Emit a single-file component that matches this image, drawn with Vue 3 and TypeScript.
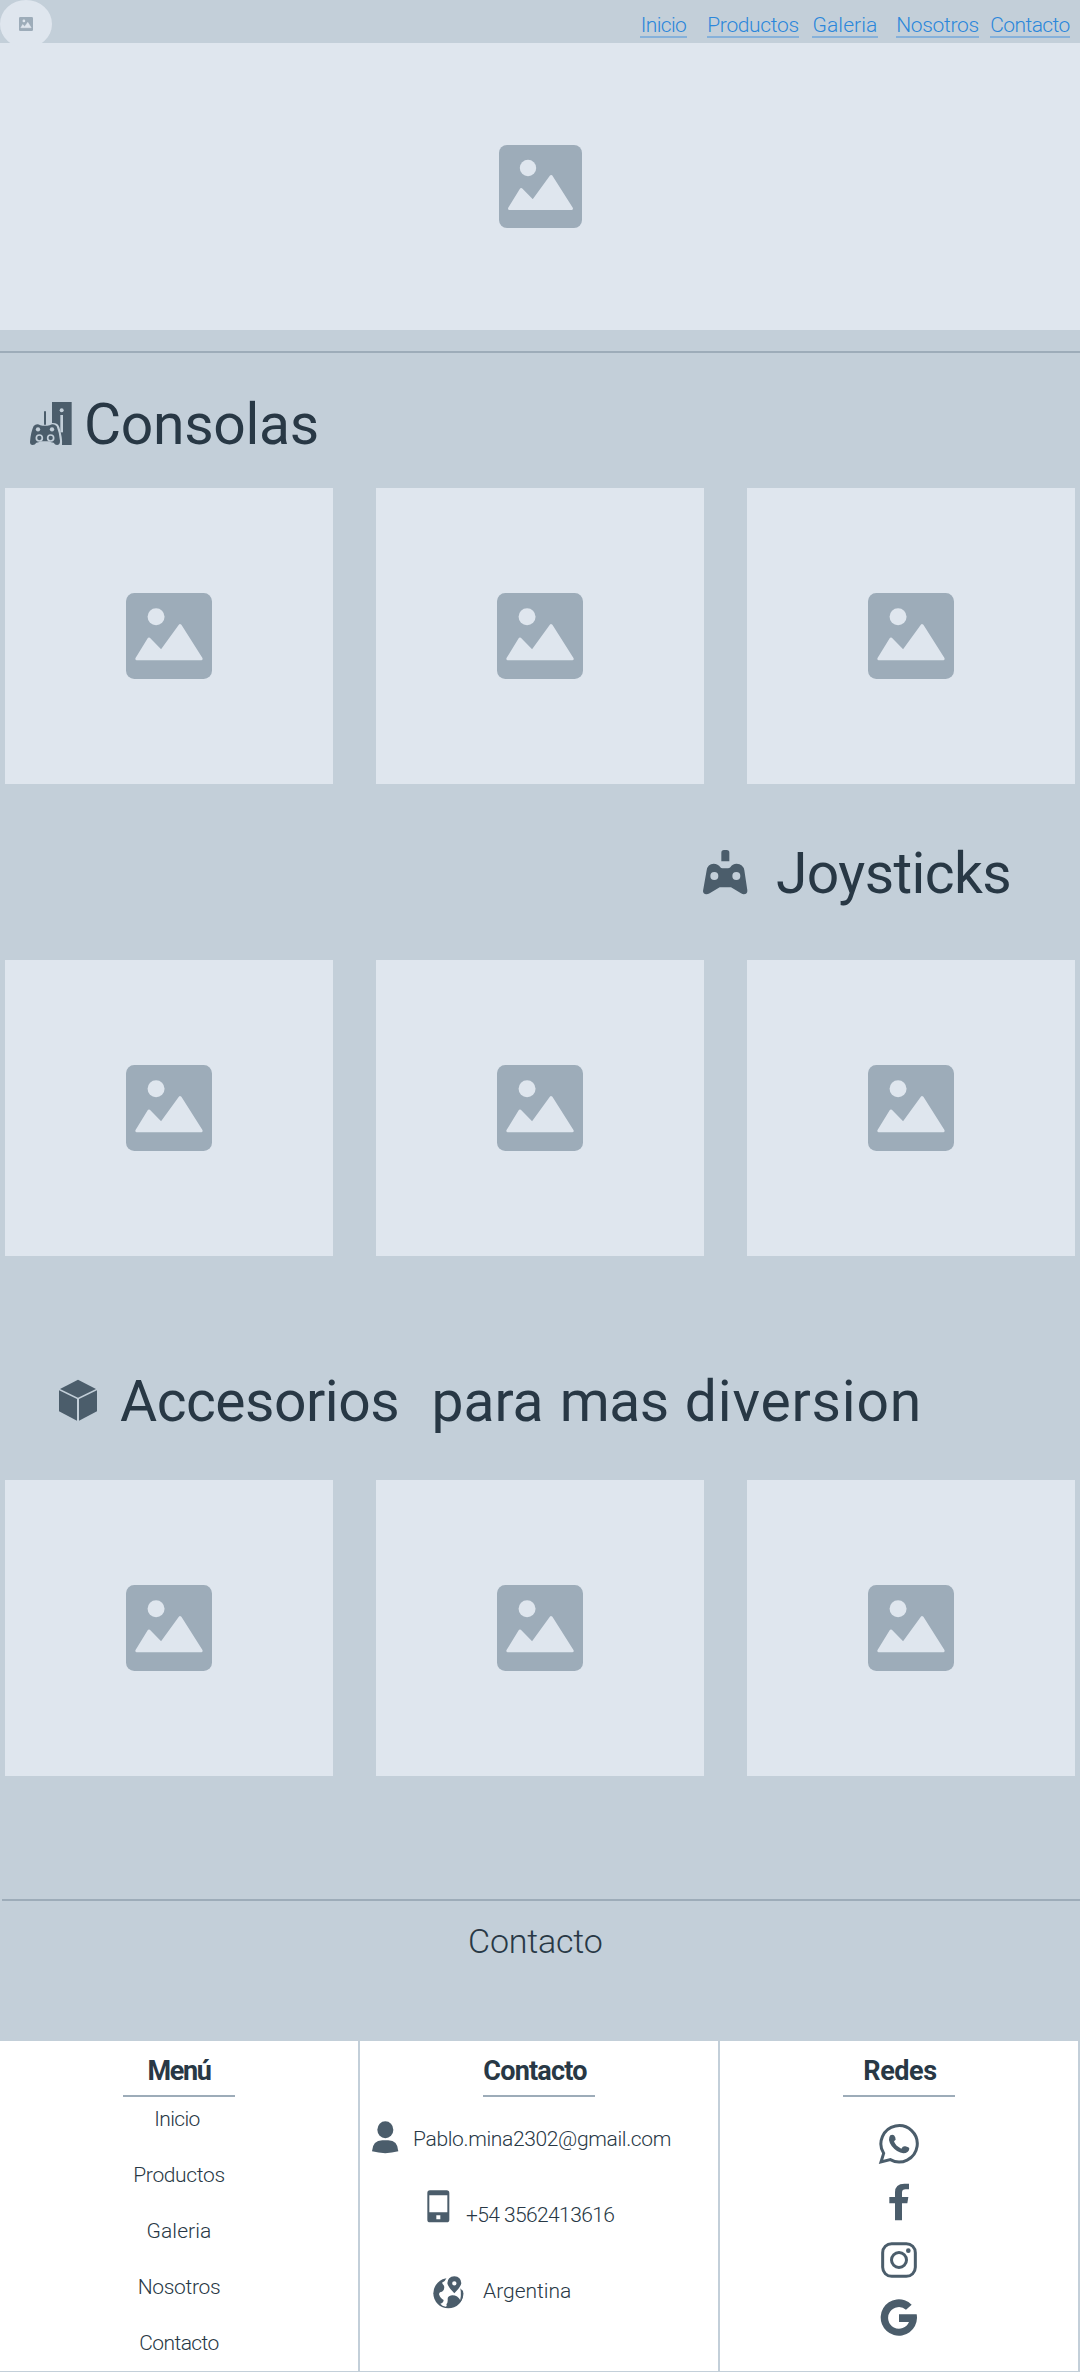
<script setup lang="ts">
interface Label {
  text: string
  width: number
  tracking: number
}

const links: Label[] = [
  { text: 'Inicio', width: 47, tracking: -0.6 },
  { text: 'Productos', width: 92, tracking: -0.35 },
  { text: 'Galeria', width: 66, tracking: 0.1 },
  { text: 'Nosotros', width: 83, tracking: -0.3 },
  { text: 'Contacto', width: 80, tracking: -0.6 },
]
const cards = [1, 2, 3]
</script>

<template>
  <div class="page">
    <header class="bar">
      <div class="logo">
        <svg class="pic pic-logo" viewBox="0 0 83 83"><rect width="83" height="83" rx="8" /><circle cx="29" cy="23" r="8.2" /><path d="M10.5 63.500L22.200 44.500L34 56.500L52.200 31.500L72.500 63.500Z" /></svg>
      </div>
      <nav class="nav">
        <a v-for="l in links" :key="l.text" class="link" :style="{ width: l.width + 'px', letterSpacing: l.tracking + 'px' }">{{ l.text }}</a>
      </nav>
    </header>

    <div class="hero">
      <svg class="pic pic-hero" viewBox="0 0 83 83"><rect width="83" height="83" rx="8" /><circle cx="29" cy="23" r="8.2" /><path d="M10.5 63.500L22.200 44.500L34 56.500L52.200 31.500L72.500 63.500Z" /></svg>
    </div>
    <div class="rule rule-top"></div>

    <section>
      <div class="heading h-consolas">
        <svg width="42" height="43" viewBox="90 276 126 129" class="ico">
          <path d="M156 276H215V405H156Z" />
          <path d="M132 304H138V344H132Z" />
          <circle cx="185" cy="301" r="6" class="cut" />
          <path d="M181 315H189V367H181Z" class="cut" />
          <path d="M154 339Q174 337 178 352Q188 384 186 405H152Z" class="cut" />
          <path d="M101 348Q110 339 121 346Q135 349 149 346Q161 339 170 349Q177 366 180 392Q180 405 171 405Q165 405 161 398Q153 398 148 394H122Q116 398 109 398Q105 405 98 405Q90 405 90 396Q92 367 101 348Z" />
          <circle cx="114" cy="358" r="6.500" class="cut" /><circle cx="156" cy="358" r="6.500" class="cut" />
          <circle cx="118" cy="384" r="9" class="ring" /><circle cx="152" cy="384" r="9" class="ring" />
        </svg>
        <h2>Consolas</h2>
      </div>
      <div class="cards">
        <div v-for="c in cards" :key="c" class="card"><svg class="pic" viewBox="0 0 83 83"><rect width="83" height="83" rx="8" /><circle cx="29" cy="23" r="8.2" /><path d="M10.5 63.500L22.200 44.500L34 56.500L52.200 31.500L72.500 63.500Z" /></svg></div>
      </div>
    </section>

    <section>
      <div class="heading h-joysticks">
        <svg width="45" height="45" viewBox="68 89 135 135" class="ico">
          <path d="M123 123V97Q123 89 131 89H139Q147 89 147 97V123Z" />
          <path d="M79 150Q82 130 100 130Q113 130 120 141Q122 144 126 144H143Q147 144 150 141Q156 130 169 130Q188 130 192 150L201 210Q202 222 190 222Q187 222 182 219L152 201H118L88 219Q83 222 78 222Q68 221 68 212Z" />
          <circle cx="102" cy="167" r="12" class="cut" /><circle cx="168" cy="167" r="12" class="cut" />
        </svg>
        <h2>Joysticks</h2>
      </div>
      <div class="cards">
        <div v-for="c in cards" :key="c" class="card"><svg class="pic" viewBox="0 0 83 83"><rect width="83" height="83" rx="8" /><circle cx="29" cy="23" r="8.2" /><path d="M10.5 63.500L22.200 44.500L34 56.500L52.200 31.500L72.500 63.500Z" /></svg></div>
      </div>
    </section>

    <section>
      <div class="heading h-accesorios">
        <svg width="38" height="42" viewBox="57 116 114 126" class="ico">
          <path d="M114 118L168 146L114 172L60 146Z" />
          <path d="M57 150L111 176V241L57 213Z" /><path d="M171 150L117 176V241L171 213Z" />
        </svg>
        <h2><span class="tight">Accesorios</span>&nbsp; para <span class="tight">mas</span> <span class="wide">diversion</span></h2>
      </div>
      <div class="cards">
        <div v-for="c in cards" :key="c" class="card"><svg class="pic" viewBox="0 0 83 83"><rect width="83" height="83" rx="8" /><circle cx="29" cy="23" r="8.2" /><path d="M10.5 63.500L22.200 44.500L34 56.500L52.200 31.500L72.500 63.500Z" /></svg></div>
      </div>
    </section>

    <div class="rule rule-bottom"></div>
    <h3 class="contact-title">Contacto</h3>

    <footer class="footer">
      <div class="col">
        <h4 class="t-menu">Menú</h4>
        <ul class="menu">
          <li v-for="l in links" :key="l.text" :style="{ letterSpacing: l.tracking + 'px' }">{{ l.text }}</li>
        </ul>
      </div>
      <div class="col">
        <h4 class="t-contacto">Contacto</h4>
        <div class="row r-mail">
          <svg width="27" height="33" viewBox="68 275 81 99" class="ico"><ellipse cx="108" cy="301.500" rx="24" ry="25.500" /><path d="M68 366Q70 333 99 333H117Q145 333 147 366Q108 377 68 366Z" /></svg>
          <span>Pablo.mina2302@gmail.com</span>
        </div>
        <div class="row r-phone">
          <svg width="23" height="33" viewBox="233 479 69 99" class="ico"><path fill-rule="evenodd" d="M242 480H292Q300 480 300 488V568Q300 576 292 576H242Q234 576 234 568V488Q234 480 242 480ZM240 495V546H294V495ZM261 555V567H273V555Z" /></svg>
          <span>+54 3562413616</span>
        </div>
        <div class="row r-place">
          <svg width="31" height="33" viewBox="251 737 93 99" class="ico">
            <circle cx="297" cy="789" r="45" />
            <path class="white" d="M278 757Q289 751 292 742L344 732V778L336 782Q338 796 334 811Q324 794 308 795Q294 797 295 807Q296 817 291 822Q294 827 289 829Q278 827 273 820Q282 819 283 809Q273 805 269 792Q269 785 278 784Q287 779 284 766Q280 761 278 757Z" />
            <path d="M333 774Q344 784 341 799Q337 813 329 820Q338 799 333 774Z" />
            <path fill-rule="evenodd" d="M315 738Q335 739 336 759Q335 769 315 789Q295 769 294 759Q295 739 315 738ZM315 752.500A6.500 6.500 0 1 0 315 765.500A6.500 6.500 0 1 0 315 752.500Z" />
          </svg>
          <span>Argentina</span>
        </div>
      </div>
      <div class="col">
        <h4 class="t-redes">Redes</h4>
        <div class="social">
          <svg width="42" height="42" viewBox="504 279 126 126" class="ico"><path class="line" d="M513 396L521 370A54.500 54.500 0 1 1 541 389Z" /><path d="M541 316Q547 312 552 316Q557 321 557 329L552 334Q556 348 574 356Q579 347 586 349Q597 351 598 356Q596 369 580 370Q561 368 545 348Q531 328 541 316Z" /></svg>
          <svg class="fb" width="42" height="38" viewBox="504 459 126 114"><path d="M555 571V520H538V501H555V487Q555 461 583 461H597V478H587Q576 478 576 488V501H595L592 520H576V571Z" /></svg>
          <svg width="42" height="38" viewBox="504 633 126 114" class="ico"><rect class="line" x="518" y="641" width="98" height="98" rx="27" /><circle class="line" cx="567" cy="690" r="22.500" /><circle cx="595" cy="662" r="7" /></svg>
          <svg width="42" height="38" viewBox="504 807 126 114" class="ico"><path d="M605 824A54.500 54.500 0 1 0 621 864Q621 858 620 853H567V876H597A32.500 32.500 0 1 1 588 839Z" /></svg>
        </div>
      </div>
    </footer>
  </div>
</template>

<style>
body {
  margin: 0;
}
</style>

<style scoped>
.page {
  width: 1080px;
  height: 2372px;
  overflow: hidden;
  background: #c3cfd9;
  color: #283845;
  font-family: Roboto, 'Noto Sans', sans-serif;
}
h2, h3, h4, ul { margin: 0; padding: 0; }
svg { display: block; flex: none; }
.ico, .fb { fill: #4b5d6b; }
.cut { fill: #c3cfd9; }
.white { fill: #fff; }
.ring { fill: none; stroke: #c3cfd9; stroke-width: 5; }
.line { fill: none; stroke: #4b5d6b; stroke-width: 9; }
.bar { height: 43px; display: flex; }
.logo {
  width: 52px;
  height: 48px;
  border-radius: 50%;
  background: #dfe6ee;
  display: flex;
  align-items: center;
  justify-content: center;
}
.pic { width: 86px; height: 86px; fill: #9dacb9; }
.pic circle { fill: #dfe6ee; }
.pic path { fill: #dfe6ee; stroke: #dfe6ee; stroke-width: 3; stroke-linejoin: round; }
.pic-logo { width: 14px; height: 14px; }
.pic-hero { width: 83px; height: 83px; }
.nav {
  margin-left: 588px;
  display: grid;
  grid-template-columns: 67px 105px 84px 94px 82px;
}
.link {
  height: 24px;
  margin-top: 12px;
  border-bottom: 2px solid #86b1da;
  color: #2b87db;
  font-size: 21px;
  font-weight: 300;
  line-height: 26px;
  text-align: center;
  white-space: nowrap;
}
.hero {
  height: 287px;
  background: #dfe6ee;
  display: flex;
  align-items: center;
  justify-content: center;
}
.rule { height: 2px; background: #9dacb9; }
.rule-top { margin-top: 21px; }
.rule-bottom { margin: 123px 0 0 2px; }
.heading {
  display: flex;
  align-items: flex-start;
  box-sizing: border-box;
}
h2 {
  font-size: 57px;
  font-weight: 400;
  line-height: 60px;
  white-space: nowrap;
}
.tight { letter-spacing: -0.5px; }
.wide { letter-spacing: 0.8px; }
.h-consolas { height: 135px; padding: 49px 0 0 30px; }
.h-consolas h2 { margin: -7px 0 0 12px; letter-spacing: -0.3px; }
.h-joysticks { height: 176px; padding: 66px 0 0 703px; }
.h-joysticks h2 { margin: -6px 0 0 28px; letter-spacing: -0.6px; }
.h-accesorios { height: 224px; padding: 123px 0 0 59px; }
.h-accesorios h2 { margin: -7px 0 0 23px; word-spacing: 2px; }
.cards {
  display: grid;
  grid-template-columns: repeat(3, 328px);
  gap: 43px;
  padding-left: 5px;
}
.card {
  height: 296px;
  background: #dfe6ee;
  display: flex;
  align-items: center;
  justify-content: center;
}
.contact-title {
  height: 140px;
  box-sizing: border-box;
  padding: 20px 0 0 468px;
  font-size: 34px;
  font-weight: 300;
  line-height: 40px;
  letter-spacing: -0.2px;
}
.footer {
  height: 331px;
  box-sizing: border-box;
  display: grid;
  grid-template-columns: repeat(3, 360px);
  background: #fff;
  border-bottom: 1px solid #c3cfd9;
}
.col {
  border-right: 2px solid #c3cfd9;
  font-size: 21px;
  font-weight: 300;
}
h4 {
  width: 112px;
  height: 54px;
  margin: 0 auto;
  border-bottom: 2px solid #9dacb9;
  font-size: 27px;
  font-weight: 700;
  line-height: 60px;
  text-align: center;
  white-space: nowrap;
}
.t-menu { letter-spacing: -1.4px; }
.t-contacto { letter-spacing: -0.8px; text-indent: -8px; }
.t-redes { letter-spacing: -0.4px; text-indent: 2px; }
.menu { list-style: none; text-align: center; }
.menu li { height: 56px; line-height: 44px; }
.menu li:first-child { text-indent: -4px; }
.row { display: flex; line-height: 26px; white-space: nowrap; }
.r-mail { padding: 24px 0 0 12px; }
.r-mail span { margin: 5px 0 0 14px; letter-spacing: -0.35px; }
.r-phone { padding: 36px 0 0 67px; }
.r-phone span { margin: 12px 0 0 16px; letter-spacing: -0.6px; }
.r-place { padding: 48px 0 0 73px; }
.r-place span { margin: 2px 0 0 19px; }
.social {
  display: flex;
  flex-direction: column;
  align-items: center;
  padding-top: 26px;
  gap: 20px;
}
.fb { margin-top: -2px; }
</style>
